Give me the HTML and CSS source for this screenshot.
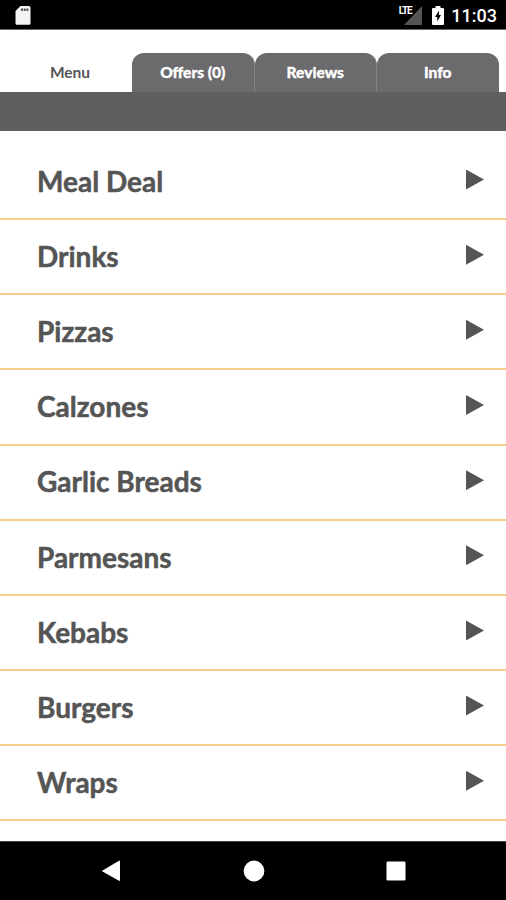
FILE: index.html
```html
<!DOCTYPE html>
<html lang="en">
<head>
<meta charset="utf-8">
<title>Menu</title>
<link rel="stylesheet" href="styles.css">
</head>
<body>
<div class="screen">
  <header class="status">
    <svg class="sd" width="16" height="19" viewBox="0 0 16 19"><path fill="#f4f4f4" d="M5.5 0H14q1.5 0 1.5 1.5v15.700q0 1.500-1.500 1.500H2q-1.500 0-1.500-1.500V5z"/><path stroke="#555" stroke-width="2" d="M7 2.500v2.500M9.700 2.500v2.500M12.400 2.500v2.500"/></svg>
    <div class="signal"><span class="lte">LTE</span><svg width="18" height="19" viewBox="0 0 18 19"><path fill="#555" d="M18 0v19H0z"/></svg></div>
    <svg class="battery" width="12" height="19" viewBox="0 0 12 19"><path fill="#fff" d="M3.500 0h5v2H11q1 0 1 1v15q0 1-1 1H1q-1 0-1-1V3q0-1 1-1h2.500z"/><path fill="#000" d="M7 4.500 3 11h2.300v4.500L9 9H6.800z"/></svg>
    <time class="clock">11:03</time>
  </header>
  <nav class="tabs">
    <div class="tab active">Menu</div>
    <div class="tab">Offers (0)</div>
    <div class="tab">Reviews</div>
    <div class="tab">Info</div>
  </nav>
  <div class="bar"></div>
  <ul class="list">
    <li class="row"><span>Meal Deal</span><i class="arrow"></i></li>
    <li class="row"><span>Drinks</span><i class="arrow"></i></li>
    <li class="row"><span>Pizzas</span><i class="arrow"></i></li>
    <li class="row"><span>Calzones</span><i class="arrow"></i></li>
    <li class="row"><span>Garlic Breads</span><i class="arrow"></i></li>
    <li class="row"><span>Parmesans</span><i class="arrow"></i></li>
    <li class="row"><span>Kebabs</span><i class="arrow"></i></li>
    <li class="row"><span>Burgers</span><i class="arrow"></i></li>
    <li class="row"><span>Wraps</span><i class="arrow"></i></li>
  </ul>
  <footer class="nav">
    <svg width="20" height="22" viewBox="0 0 20 22"><path fill="#fff" d="M18 .8q1-.5 1 .6v18.800q0 1.100-1 .6L1.500 11.500q-.8-.5 0-1z"/></svg>
    <svg width="22" height="22" viewBox="0 0 22 22"><circle cx="11" cy="11" r="10.400" fill="#fff"/></svg>
    <svg width="20" height="20" viewBox="0 0 20 20"><rect x=".5" y=".5" width="19" height="19" rx="1.300" fill="#fff"/></svg>
  </footer>
</div>
</body>
</html>
```
FILE: styles.css
```css
* { box-sizing: border-box; }
body { margin: 0; background: #fff; font-family: Lato, sans-serif; }
.screen { width: 506px; height: 900px; display: flex; flex-direction: column; overflow: hidden; }
.status { height: 30px; flex: none; background: #000; border-bottom: 1px solid #686868; display: flex; align-items: flex-start; padding: 6px 9px 0 15px; color: #fff; }
.signal { margin-left: auto; display: flex; position: relative; }
.lte { position: absolute; right: 11px; top: 0; font: bold 10px/10px "Roboto", sans-serif; letter-spacing: -1.200px; }
.battery { margin-left: 10px; }
.clock { margin-left: 7px; font: 500 18px/20px Roboto, sans-serif; }
.tabs { height: 62px; flex: none; display: flex; align-items: flex-end; padding-left: 8px; }
.tab { width: 122.500px; height: 39px; border-radius: 12px 12px 0 0; background: #6b6b6d; border-right: 1px solid #838383; color: #fff; font-weight: 900; font-size: 15.500px; line-height: 38px; text-align: center; -webkit-text-stroke: .3px; }
.tab:last-child { width: 121.500px; border-right: 0; }
.tab.active { width: 124px; background: #fff; border: 0; color: #555; font-weight: 700; -webkit-text-stroke: 0; }
.bar { height: 39px; flex: none; background: #5f5f5f; }
.list { flex: 1; min-height: 0; overflow: hidden; margin: 0; padding: 14px 0 0; list-style: none; }
.row { height: 75.150px; border-bottom: 2px solid #f8cb91; display: flex; align-items: center; justify-content: space-between; padding: 0 22px 0 37px; color: #555; font-size: 28px; font-weight: 700; -webkit-text-stroke: .5px; }
.row span { padding-bottom: 1.500px; }
.arrow { width: 18px; height: 20px; margin-bottom: 4px; background: #555; clip-path: polygon(0 0, 100% 50%, 0 100%); }
.nav { height: 59px; flex: none; background: #000; border-top: 1px solid #444; display: flex; align-items: center; justify-content: space-between; padding: 0 100px 0 101px; }
```
